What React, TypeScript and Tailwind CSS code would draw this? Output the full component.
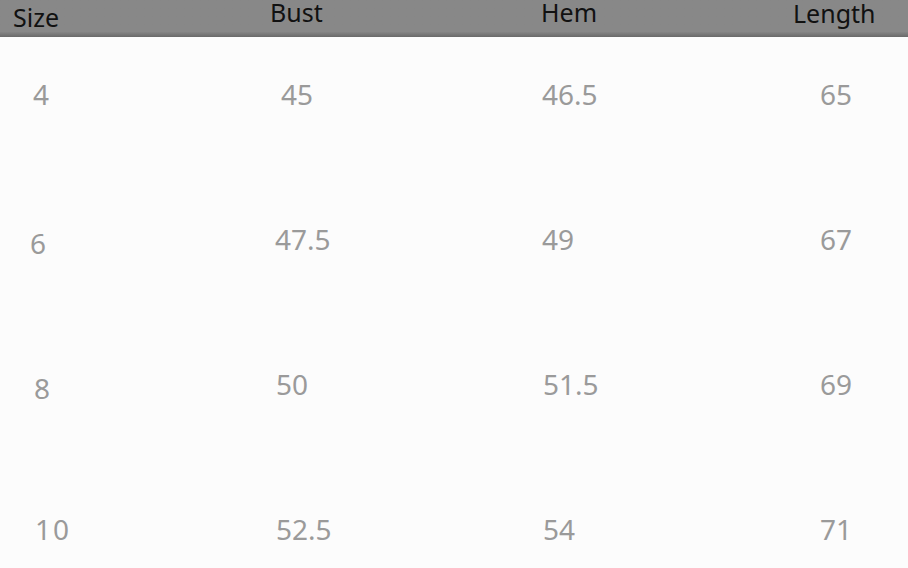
const columns = [
  { label: "Size", width: "w-[270px]", head: "pl-[13px] pt-[5px]" },
  { label: "Bust", width: "w-[271px]", head: "pl-0 pt-0" },
  { label: "Hem", width: "w-[252px]", head: "pl-0 pt-0" },
  { label: "Length", width: "flex-1", head: "pl-0 pt-[1px]" },
];

// each cell: [value, left offset class, top offset class]
const rows: [string, string, string][][] = [
  [
    ["4", "pl-[33px]", "mt-0"],
    ["45", "pl-[11px]", "mt-0"],
    ["46.5", "pl-[1px]", "mt-0"],
    ["65", "pl-[27px]", "mt-0"],
  ],
  [
    ["6", "pl-[30px]", "mt-[4px]"],
    ["47.5", "pl-[5px]", "mt-0"],
    ["49", "pl-[1px]", "mt-0"],
    ["67", "pl-[27px]", "mt-0"],
  ],
  [
    ["8", "pl-[34px]", "mt-[4px]"],
    ["50", "pl-[6px]", "mt-0"],
    ["51.5", "pl-[2px]", "mt-0"],
    ["69", "pl-[27px]", "mt-0"],
  ],
  [
    ["10", "pl-[35px] tracking-[2px]", "mt-0"],
    ["52.5", "pl-[6px]", "mt-0"],
    ["54", "pl-[2px]", "mt-0"],
    ["71", "pl-[27px]", "mt-0"],
  ],
];

export default function App() {
  return (
    <div className="h-[568px] w-[908px] overflow-hidden bg-[#fcfcfc] font-['Noto_Sans',sans-serif]">
      <div className="flex h-[37px] items-start bg-gradient-to-b from-[#888888] from-85% to-[#6a6a6a] text-[25px] leading-[25px] text-[#111]">
        {columns.map((c) => (
          <div key={c.label} className={`${c.width} ${c.head}`}>
            {c.label}
          </div>
        ))}
      </div>
      <div className="flex flex-col gap-[105px] pt-[37px]">
        {rows.map((row, i) => (
          <div key={i} className="flex h-[40px] text-[28px] leading-[40px] text-[#9a9a9a]">
            {row.map(([v, pl, mt], j) => (
              <div key={j} className={`${columns[j].width} ${pl} ${mt}`}>
                {v}
              </div>
            ))}
          </div>
        ))}
      </div>
    </div>
  );
}
